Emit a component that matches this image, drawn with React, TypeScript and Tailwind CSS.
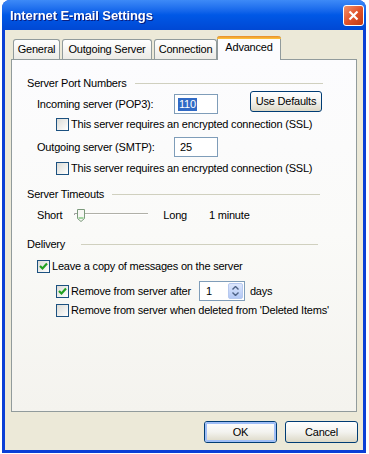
import React from 'react';

const Check: React.FC<{ checked?: boolean }> = ({ checked }) => (
    <div className="w-[13px] h-[13px] border border-[#1c5180] bg-gradient-to-br from-[#dcdcd7] to-white flex items-center justify-center shrink-0">
        {checked && (
            <svg width="9" height="9" viewBox="0 0 9 9">
                <path d="M1 4 L3.5 6.5 L8 1.5" stroke="#21a121" strokeWidth="2.2" fill="none" />
            </svg>
        )}
    </div>
);

const SectionHeader: React.FC<{ title: string; className: string; lineLeft: string; lineRight: string }> = ({ title, className, lineLeft, lineRight }) => (
    <div className={`flex items-center h-[14px] pl-[15px] ${className}`}>
        <span>{title}</span>
        <div className={`flex-1 h-px bg-[#d0d0bf] ${lineLeft} ${lineRight}`} />
    </div>
);

const XpButton: React.FC<{ label: string; primary?: boolean; className?: string }> = ({ label, primary, className = '' }) => (
    <div className={`border border-[#003c74] rounded-[3px] bg-gradient-to-b from-white via-[#f3f3ef] to-[#dcd8c6] flex items-center justify-center ${className}`}>
        <div className={`w-full h-full rounded-[2px] flex items-center justify-center ${primary ? 'border-[2px] border-[#9fbef7]' : ''}`}>
            {label}
        </div>
    </div>
);

const App: React.FC = () => {
    return (
        <div className="w-[369px] h-[454px] bg-white font-['Liberation_Sans',Arial,sans-serif] text-[11px] tracking-[-0.2px] text-black leading-[13px]">
            <div className="ml-[2px] w-[364px] h-[453px] rounded-t-[8px] bg-[#0a3fd6] flex flex-col overflow-hidden">
                {/* Title bar */}
                <div className="h-[30px] flex items-center justify-between pl-[8px] pr-[2px] bg-gradient-to-b from-[#3d8af7] via-[#0058e6] to-[#0048d4] shrink-0">
                    <span className="text-white font-bold text-[13px] tracking-[-0.1px] drop-shadow-[1px_1px_0_#0a1f80]">Internet E-mail Settings</span>
                    <div className="w-[21px] h-[21px] rounded-[3px] border border-white bg-gradient-to-br from-[#f0906a] via-[#e2532b] to-[#c23a10] flex items-center justify-center">
                        <svg width="11" height="11" viewBox="0 0 11 11">
                            <path d="M1.5 1.5 L9.5 9.5 M9.5 1.5 L1.5 9.5" stroke="white" strokeWidth="2.2" />
                        </svg>
                    </div>
                </div>

                {/* Body */}
                <div className="flex-1 mx-[3px] mb-[3px] bg-[#ece9d8] flex flex-col">
                    {/* Tabs */}
                    <div className="flex items-end ml-[8px] mt-[6px] h-[23px]">
                        <div className="h-[20px] w-[47px] border border-b-0 border-[#919b9c] rounded-t-[3px] bg-gradient-to-b from-white to-[#ecebe6] flex items-center justify-center">General</div>
                        <div className="h-[20px] w-[90px] ml-[2px] border border-b-0 border-[#919b9c] rounded-t-[3px] bg-gradient-to-b from-white to-[#ecebe6] flex items-center justify-center">Outgoing Server</div>
                        <div className="h-[20px] w-[63px] ml-[2px] border border-b-0 border-[#919b9c] rounded-t-[3px] bg-gradient-to-b from-white to-[#ecebe6] flex items-center justify-center">Connection</div>
                        <div className="h-[24px] w-[64px] -mb-px relative z-10 border-x border-[#919b9c] rounded-t-[3px] bg-[#fcfcfe] flex flex-col">
                            <div className="h-[3px] rounded-t-[3px] bg-gradient-to-b from-[#e68b2c] to-[#ffc73c] -mx-px" />
                            <div className="flex-1 flex items-start justify-center pt-[2px]">Advanced</div>
                        </div>
                    </div>

                    {/* Panel */}
                    <div className="mx-[6px] h-[353px] border border-[#919b9c] bg-gradient-to-b from-[#fcfcfe] via-[#fafaf8] to-[#f4f3ee] flex flex-col">
                        <SectionHeader title="Server Port Numbers" className="mt-[16px]" lineLeft="ml-[8px]" lineRight="mr-[33px]" />

                        <div className="flex items-start h-[23px] mt-[1px] pl-[25px]">
                            <span className="w-[137px] mt-[7px]">Incoming server (POP3):</span>
                            <div className="mt-[3px] w-[44px] h-[20px] border border-[#7f9db9] bg-white flex items-center pl-[3px]">
                                <span className="bg-[#316ac5] text-white px-[1px]">110</span>
                            </div>
                            <XpButton label="Use Defaults" className="ml-[32px] w-[72px] h-[21px]" />
                        </div>

                        <div className="flex items-center mt-[4px] pl-[44px] gap-[2px]">
                            <Check />
                            <span>This server requires an encrypted connection (SSL)</span>
                        </div>

                        <div className="flex items-center h-[20px] mt-[6px] pl-[25px]">
                            <span className="w-[137px]">Outgoing server (SMTP):</span>
                            <div className="w-[44px] h-[20px] border border-[#7f9db9] bg-white flex items-center pl-[5px]">25</div>
                        </div>

                        <div className="flex items-center mt-[5px] pl-[44px] gap-[2px]">
                            <Check />
                            <span>This server requires an encrypted connection (SSL)</span>
                        </div>

                        <SectionHeader title="Server Timeouts" className="mt-[12px]" lineLeft="ml-[8px]" lineRight="mr-[36px]" />

                        <div className="flex items-center h-[18px] mt-[5px] pl-[25px]">
                            <span>Short</span>
                            <svg width="76" height="18" viewBox="0 0 76 18" className="ml-[11px]">
                                <path d="M1.5 9 L1.5 7.5 L4 7.5" stroke="#a0a0a0" fill="none" />
                                <line x1="4" y1="7.5" x2="75" y2="7.5" stroke="#b0b0a8" />
                                <line x1="4" y1="8.5" x2="75" y2="8.5" stroke="#ffffff" />
                                <path d="M4.5 3.5 H11.5 V12.5 L8 15.5 L4.5 12.5 Z" fill="#f7f7f4" stroke="#7c9a7c" />
                                <line x1="5.5" y1="12" x2="10.5" y2="12" stroke="#4fb24f" />
                            </svg>
                            <span className="ml-[14px]">Long</span>
                            <span className="ml-[22px]">1 minute</span>
                        </div>

                        <SectionHeader title="Delivery" className="mt-[13px]" lineLeft="ml-[16px]" lineRight="mr-[38px]" />

                        <div className="flex items-center mt-[9px] pl-[25px] gap-[2px]">
                            <Check checked />
                            <span>Leave a copy of messages on the server</span>
                        </div>

                        <div className="flex items-center h-[20px] mt-[8px] pl-[44px]">
                            <Check checked />
                            <span className="ml-[2px]">Remove from server after</span>
                            <div className="ml-[8px] w-[46px] h-[20px] border border-[#7f9db9] bg-white flex items-center justify-between pl-[6px] pr-[1px]">
                                <span>1</span>
                                <div className="w-[15px] h-[16px] rounded-[2px] bg-gradient-to-b from-[#dce6fc] to-[#b3c8f5] border border-[#b7c9ef] flex flex-col items-center justify-center gap-[2px]">
                                    <svg width="7" height="4" viewBox="0 0 7 4"><path d="M0.5 3.5 L3.5 0.5 L6.5 3.5" stroke="#4d6185" strokeWidth="1.4" fill="none" /></svg>
                                    <svg width="7" height="4" viewBox="0 0 7 4"><path d="M0.5 0.5 L3.5 3.5 L6.5 0.5" stroke="#4d6185" strokeWidth="1.4" fill="none" /></svg>
                                </div>
                            </div>
                            <span className="ml-[5px]">days</span>
                        </div>

                        <div className="flex items-center mt-[3px] pl-[44px] gap-[2px]">
                            <Check />
                            <span>Remove from server when deleted from 'Deleted Items'</span>
                        </div>
                    </div>

                    {/* Footer buttons */}
                    <div className="flex justify-end gap-[8px] mr-[5px] mt-[9px]">
                        <XpButton label="OK" primary className="w-[73px] h-[22px]" />
                        <XpButton label="Cancel" className="w-[73px] h-[22px]" />
                    </div>
                </div>
            </div>
        </div>
    );
};

export default App;
